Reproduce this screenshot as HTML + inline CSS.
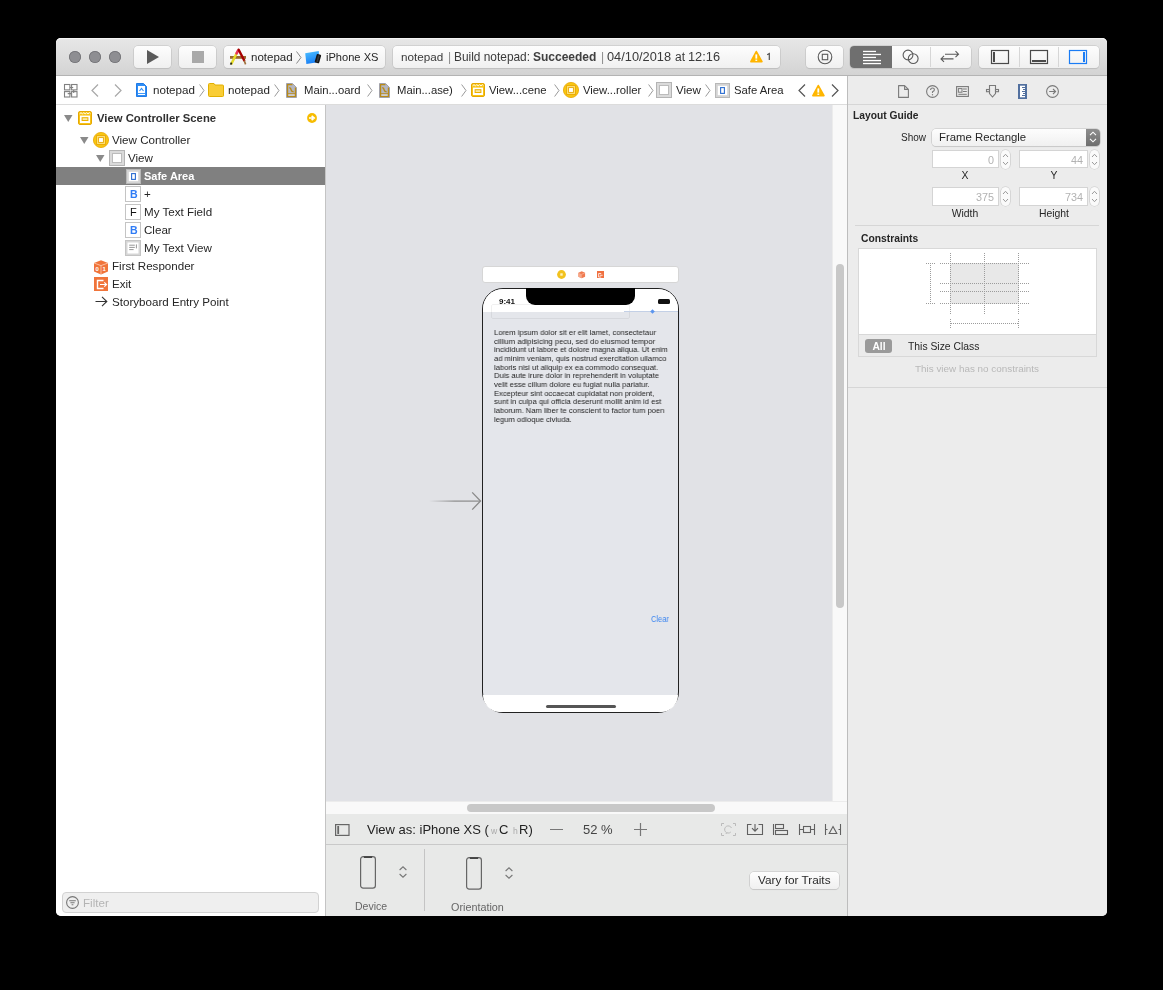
<!DOCTYPE html>
<html><head><meta charset="utf-8">
<style>
*{box-sizing:border-box;margin:0;padding:0}
html,body{width:1163px;height:990px;background:#000;overflow:hidden}
body{position:relative;font-family:"Liberation Sans",sans-serif;color:#262626}
.a{position:absolute}
svg.a{overflow:visible}
.t{position:absolute;white-space:nowrap;line-height:1;will-change:transform}
.btn{position:absolute;border-radius:4px;background:linear-gradient(#fdfdfd,#f0f0f0);box-shadow:0 0 0 0.6px #c2c2c2,0 0.8px 0.8px rgba(0,0,0,.12)}
</style></head><body>

<div class="a" style="left:56px;top:38px;width:1051px;height:878px;border-radius:5px;background:#ececec;overflow:hidden"></div>
<div class="a" style="left:56px;top:38px;width:1051px;height:38px;border-radius:5px 5px 0 0;background:linear-gradient(#e7e7e7,#d3d3d3);box-shadow:inset 0 1px 0 #f4f4f4"></div>
<div class="a" style="left:56px;top:75px;width:1051px;height:1px;background:#b4b4b4"></div>
<div class="a" style="left:69px;top:51px;width:12px;height:12px;border-radius:50%;background:#8e8e92;box-shadow:inset 0 0 0 0.8px #727276"></div>
<div class="a" style="left:89px;top:51px;width:12px;height:12px;border-radius:50%;background:#8e8e92;box-shadow:inset 0 0 0 0.8px #727276"></div>
<div class="a" style="left:109px;top:51px;width:12px;height:12px;border-radius:50%;background:#8e8e92;box-shadow:inset 0 0 0 0.8px #727276"></div>
<div class="btn" style="left:134px;top:46px;width:37px;height:22px"></div>
<div class="btn" style="left:179px;top:46px;width:37px;height:22px"></div>
<div class="btn" style="left:224px;top:46px;width:161px;height:22px"></div>
<div class="btn" style="left:393px;top:46px;width:387px;height:22px"></div>
<div class="btn" style="left:806px;top:46px;width:37px;height:22px"></div>
<div class="btn" style="left:850px;top:46px;width:121px;height:22px"></div>
<div class="btn" style="left:979px;top:46px;width:120px;height:22px"></div>
<svg class="a" style="left:147px;top:50px;" width="12" height="14" viewBox="0 0 12 14"><path d="M0 0 L12 7 L0 14Z" fill="#5a5a5a"/></svg>
<div class="a" style="left:192px;top:51px;width:12px;height:12px;background:#a9a9a9"></div>
<svg class="a" style="left:229px;top:48px;" width="18" height="17" viewBox="0 0 18 17"><rect x="1" y="8" width="16" height="2.8" fill="#9a6a30"/>
<path d="M2.1 16.4 L7.9 4.9" stroke="#e6dc28" stroke-width="2.4"/>
<path d="M7.6 5.4 L8.9 2.8" stroke="#e8305a" stroke-width="2.6" stroke-linecap="round"/>
<path d="M1.6 16.6 L2.6 14.6" stroke="#222" stroke-width="1.6"/>
<path d="M9.6 1.6 L15.2 12.4" stroke="#a60000" stroke-width="2.3" stroke-linecap="round"/>
<path d="M15.2 12.6 L16.6 16.4" stroke="#a0703c" stroke-width="1.6"/></svg>
<div class="t" style="left:250.50px;top:52px;font-size:11.5px;font-weight:400;color:#262626;">notepad</div>
<svg class="a" style="left:295.5px;top:51px;" width="6" height="13" viewBox="0 0 6 13"><path d="M0.5 0.5 L5 6.5 L0.5 12.5" fill="none" stroke="#888" stroke-width="1"/></svg>
<svg class="a" style="left:305px;top:50px;" width="16" height="14" viewBox="0 0 16 14"><defs><linearGradient id="sg" x1="0" y1="0" x2="0.3" y2="1"><stop offset="0" stop-color="#4cc0ff"/><stop offset="1" stop-color="#1a80f5"/></linearGradient></defs><path d="M0.2 3.2 L13.8 1.1 L14.2 12 L1.4 13.9Z" fill="url(#sg)"/>
<rect x="10.6" y="4.3" width="4.6" height="8.8" rx="0.9" fill="#161616" transform="rotate(16 12.9 8.7)"/><rect x="12.2" y="5.4" width="1.6" height="6.6" fill="#3a3a3a" transform="rotate(16 12.9 8.7)"/></svg>
<div class="t" style="left:325.60px;top:52px;font-size:11.1px;font-weight:400;color:#262626;">iPhone XS</div>
<div class="t" style="left:401.00px;top:51px;font-size:11.7px;font-weight:400;color:#3a3a3a;">notepad</div>
<div class="t" style="left:448.20px;top:51px;font-size:12px;font-weight:400;color:#8a8a8a;">|</div>
<div class="t" style="left:454.20px;top:52px;font-size:11.9px;font-weight:400;color:#3a3a3a;">Build notepad:</div>
<div class="t" style="left:533.40px;top:51px;font-size:12px;font-weight:700;color:#404040;">Succeeded</div>
<div class="t" style="left:600.60px;top:51px;font-size:12px;font-weight:400;color:#8a8a8a;">|</div>
<div class="t" style="left:606.80px;top:51px;font-size:12.8px;font-weight:400;color:#3a3a3a;">04/10/2018</div>
<div class="t" style="left:674.80px;top:51px;font-size:12px;font-weight:400;color:#3a3a3a;">at</div>
<div class="t" style="left:688.40px;top:51px;font-size:12.8px;font-weight:400;color:#3a3a3a;">12:16</div>
<svg class="a" style="left:749.5px;top:50px;" width="13" height="13" viewBox="0 0 13 13"><path d="M6.3 1.6 L11.9 11.6 H0.9Z" fill="#ffba00" stroke="#ffb400" stroke-linejoin="round" stroke-width="1.7"/><rect x="5.4" y="4.4" width="1.8" height="4.2" fill="#fff"/><rect x="5.4" y="9.6" width="1.8" height="1.3" fill="#fff"/></svg>
<svg class="a" style="left:766px;top:53px;" width="5" height="8" viewBox="0 0 5 8"><path d="M1.2 1.8 L3.3 0.6 V7" fill="none" stroke="#505050" stroke-width="1.2"/></svg>
<svg class="a" style="left:817px;top:49px;" width="16" height="16" viewBox="0 0 16 16"><circle cx="8" cy="8" r="6.8" fill="none" stroke="#5a5a5a" stroke-width="1.1"/><rect x="5.3" y="5.3" width="5.4" height="5.4" fill="none" stroke="#5a5a5a" stroke-width="1.1"/></svg>
<div class="a" style="left:850px;top:46px;width:42px;height:22px;background:#6f6f6f;border-radius:4px 0 0 4px"></div>
<div class="a" style="left:930px;top:47px;width:1px;height:20px;background:#d6d6d6"></div>
<svg class="a" style="left:863px;top:50px;" width="19" height="15" viewBox="0 0 19 15"><rect x="0" y="0.8" width="13" height="1.3" fill="#fff"/><rect x="0" y="3.8" width="18" height="1.3" fill="#fff"/><rect x="0" y="6.8" width="13" height="1.3" fill="#fff"/><rect x="0" y="9.9" width="18" height="1.3" fill="#fff"/><rect x="0" y="12.9" width="18" height="1.3" fill="#fff"/></svg>
<svg class="a" style="left:901px;top:48px;" width="18" height="16" viewBox="0 0 18 16"><circle cx="7" cy="7" r="4.9" fill="none" stroke="#5a5a5a" stroke-width="1.1"/><circle cx="12.2" cy="10.6" r="4.9" fill="none" stroke="#5a5a5a" stroke-width="1.1"/></svg>
<svg class="a" style="left:940px;top:50px;" width="20" height="12" viewBox="0 0 20 12"><path d="M5 4.2 H18.5 M15.5 1.2 L18.5 4.2 L15.5 7.2" fill="none" stroke="#5a5a5a" stroke-width="1.1"/><path d="M1 8.9 H13.5 M4 5.9 L1 8.9 L4 11.9" fill="none" stroke="#5a5a5a" stroke-width="1.1"/></svg>
<div class="a" style="left:1019px;top:47px;width:1px;height:20px;background:#d6d6d6"></div>
<div class="a" style="left:1058px;top:47px;width:1px;height:20px;background:#d6d6d6"></div>
<svg class="a" style="left:991px;top:50px;" width="18" height="14" viewBox="0 0 18 14"><rect x="0.5" y="0.5" width="17" height="13" fill="none" stroke="#4a4a4a" stroke-width="1.2"/><rect x="2" y="2" width="2" height="10" fill="#4a4a4a"/></svg>
<svg class="a" style="left:1030px;top:50px;" width="18" height="14" viewBox="0 0 18 14"><rect x="0.5" y="0.5" width="17" height="13" fill="none" stroke="#4a4a4a" stroke-width="1.2"/><rect x="2" y="10" width="14" height="2" fill="#4a4a4a"/></svg>
<svg class="a" style="left:1069px;top:50px;" width="18" height="14" viewBox="0 0 18 14"><rect x="0.5" y="0.5" width="17" height="13" fill="none" stroke="#1a7cf5" stroke-width="1.2"/><rect x="14" y="2" width="2" height="10" fill="#1a7cf5"/></svg>
<div class="a" style="left:56px;top:76px;width:791px;height:28px;background:#fff"></div>
<div class="a" style="left:56px;top:104px;width:1051px;height:1px;background:#dcdcdc"></div>
<svg class="a" style="left:64px;top:84px;" width="14" height="14" viewBox="0 0 14 14"><g fill="none" stroke="#808080" stroke-width="1.1"><rect x="0.5" y="0.5" width="5.4" height="5.4"/><rect x="7.6" y="0.5" width="5.4" height="5.4"/><rect x="0.5" y="7.6" width="5.4" height="5.4"/><rect x="7.6" y="7.6" width="5.4" height="5.4"/><path d="M5.9 3.5 H9.2 M3.7 9.6 H7.6 M9.7 5.9 V9"/></g></svg>
<svg class="a" style="left:91px;top:84px;" width="8" height="13" viewBox="0 0 8 13"><path d="M7 0.5 L1 6.5 L7 12.5" fill="none" stroke="#a8a8a8" stroke-width="1.2"/></svg>
<svg class="a" style="left:114px;top:84px;" width="8" height="13" viewBox="0 0 8 13"><path d="M1 0.5 L7 6.5 L1 12.5" fill="none" stroke="#a8a8a8" stroke-width="1.2"/></svg>
<svg class="a" style="left:136px;top:83px;" width="11" height="14" viewBox="0 0 11 14"><path d="M0.5 0.5 H7.5 L10.5 3.5 V13.5 H0.5Z" fill="#2f8df5" stroke="#1f7be8" stroke-width="1"/><rect x="2" y="3" width="7" height="9" fill="#fff"/><path d="M3.5 8 L5.5 5.5 L7.5 8" fill="none" stroke="#2f8df5" stroke-width="1.1"/><path d="M2 10.5 H9" stroke="#2f8df5" stroke-width="0.9"/></svg>
<div class="t" style="left:153.40px;top:84px;font-size:11.6px;font-weight:400;color:#262626;">notepad</div>
<svg class="a" style="left:199px;top:83.5px;" width="6" height="13" viewBox="0 0 6 13"><path d="M0.6 0.5 L5 6.5 L0.6 12.5" fill="none" stroke="#9a9a9a" stroke-width="1"/></svg>
<svg class="a" style="left:208px;top:83px;" width="16" height="14" viewBox="0 0 16 14"><path d="M0.5 1.5 Q0.5 0.5 1.5 0.5 H6 L7 2 H14.5 Q15.5 2 15.5 3 V12.8 Q15.5 13.5 14.5 13.5 H1.5 Q0.5 13.5 0.5 12.5Z" fill="#f9cd36" stroke="#e2b000" stroke-width="1"/></svg>
<div class="t" style="left:228.20px;top:84px;font-size:11.6px;font-weight:400;color:#262626;">notepad</div>
<svg class="a" style="left:274px;top:83.5px;" width="6" height="13" viewBox="0 0 6 13"><path d="M0.6 0.5 L5 6.5 L0.6 12.5" fill="none" stroke="#9a9a9a" stroke-width="1"/></svg>
<svg class="a" style="left:286px;top:83px;" width="11" height="15" viewBox="0 0 11 15"><path d="M0.5 0.5 H6.5 L10.5 4.5 V14.5 H0.5Z" fill="#b4b6c2" stroke="#a2a2aa" stroke-width="1"/><path d="M6.4 1.6 H1.6 V13.4 H9.4 V4.6" fill="none" stroke="#b88a18" stroke-width="1.2"/><path d="M1.6 10.8 H9.4" stroke="#b88a18" stroke-width="1.1"/><rect x="2.4" y="11.4" width="6.2" height="1.3" fill="#d8dae2"/><path d="M3.2 4.6 Q5 4.8 5 6.6 Q5.4 8.6 7.6 8.8" fill="none" stroke="#b88a18" stroke-width="1.4"/></svg>
<div class="t" style="left:303.60px;top:85px;font-size:11.3px;font-weight:400;color:#262626;">Main...oard</div>
<svg class="a" style="left:367px;top:83.5px;" width="6" height="13" viewBox="0 0 6 13"><path d="M0.6 0.5 L5 6.5 L0.6 12.5" fill="none" stroke="#9a9a9a" stroke-width="1"/></svg>
<svg class="a" style="left:379px;top:83px;" width="11" height="15" viewBox="0 0 11 15"><path d="M0.5 0.5 H6.5 L10.5 4.5 V14.5 H0.5Z" fill="#b4b6c2" stroke="#a2a2aa" stroke-width="1"/><path d="M6.4 1.6 H1.6 V13.4 H9.4 V4.6" fill="none" stroke="#b88a18" stroke-width="1.2"/><path d="M1.6 10.8 H9.4" stroke="#b88a18" stroke-width="1.1"/><rect x="2.4" y="11.4" width="6.2" height="1.3" fill="#d8dae2"/><path d="M3.2 4.6 Q5 4.8 5 6.6 Q5.4 8.6 7.6 8.8" fill="none" stroke="#b88a18" stroke-width="1.4"/></svg>
<div class="t" style="left:396.60px;top:85px;font-size:11.3px;font-weight:400;color:#262626;">Main...ase)</div>
<svg class="a" style="left:461px;top:83.5px;" width="6" height="13" viewBox="0 0 6 13"><path d="M0.6 0.5 L5 6.5 L0.6 12.5" fill="none" stroke="#9a9a9a" stroke-width="1"/></svg>
<svg class="a" style="left:471px;top:83px;width:14px;height:14px" width="14" height="14" viewBox="0 0 14 14"><rect x="0.5" y="0.5" width="13" height="13" rx="1.4" fill="#f8c417" stroke="#e6a800" stroke-width="1"/><path d="M1.6 2.8 L3 1.7 L4.4 2.8 L5.8 1.7 L7.2 2.8 L8.6 1.7 L10 2.8 L11.4 1.7 L12.4 2.6" fill="none" stroke="#fff" stroke-width="1"/><rect x="2" y="4.6" width="10" height="7.4" fill="#fff"/><rect x="4.1" y="6.7" width="5.8" height="2.8" fill="#fde9a0" stroke="#ecb000" stroke-width="1"/></svg>
<div class="t" style="left:489.20px;top:85px;font-size:11.3px;font-weight:400;color:#262626;">View...cene</div>
<svg class="a" style="left:554px;top:83.5px;" width="6" height="13" viewBox="0 0 6 13"><path d="M0.6 0.5 L5 6.5 L0.6 12.5" fill="none" stroke="#9a9a9a" stroke-width="1"/></svg>
<svg class="a" style="left:563px;top:82px;width:16px;height:16px" width="16" height="16" viewBox="0 0 16 16"><circle cx="8" cy="8" r="7.6" fill="#f8c612" stroke="#e8a600" stroke-width="0.8"/><rect x="3.6" y="3.6" width="8.8" height="8.8" fill="#fde27a" stroke="#e8a600" stroke-width="0.9"/><rect x="5.6" y="5.6" width="4.8" height="4.8" fill="#fff" stroke="#e8a600" stroke-width="0.9"/></svg>
<div class="t" style="left:583.00px;top:85px;font-size:11.3px;font-weight:400;color:#262626;">View...roller</div>
<svg class="a" style="left:647.5px;top:83.5px;" width="6" height="13" viewBox="0 0 6 13"><path d="M0.6 0.5 L5 6.5 L0.6 12.5" fill="none" stroke="#9a9a9a" stroke-width="1"/></svg>
<svg class="a" style="left:656px;top:82px;width:16px;height:16px" width="16" height="16" viewBox="0 0 16 16"><rect x="0.5" y="0.5" width="15" height="15" fill="#dadada" stroke="#b4b4b4" stroke-width="1"/><rect x="3.5" y="3.5" width="9" height="9" fill="#fff" stroke="#bcbcbc" stroke-width="1"/></svg>
<div class="t" style="left:676.00px;top:84px;font-size:11.6px;font-weight:400;color:#262626;">View</div>
<svg class="a" style="left:705px;top:83.5px;" width="6" height="13" viewBox="0 0 6 13"><path d="M0.6 0.5 L5 6.5 L0.6 12.5" fill="none" stroke="#9a9a9a" stroke-width="1"/></svg>
<svg class="a" style="left:714.5px;top:82.5px;width:15px;height:15px" width="15" height="15" viewBox="0 0 15 15"><rect x="0.5" y="0.5" width="14" height="14" fill="#d4d4d4" stroke="#b8b8b8" stroke-width="1"/><rect x="2.8" y="2.8" width="9.4" height="9.4" fill="#fff"/><rect x="5.6" y="4.6" width="3.8" height="5.8" fill="none" stroke="#2a6cd0" stroke-width="1.1"/></svg>
<div class="t" style="left:734.30px;top:85px;font-size:11.3px;font-weight:400;color:#262626;">Safe Area</div>
<svg class="a" style="left:798px;top:84px;" width="8" height="13" viewBox="0 0 8 13"><path d="M7 0.5 L1 6.5 L7 12.5" fill="none" stroke="#555" stroke-width="1.2"/></svg>
<svg class="a" style="left:811.5px;top:84px;" width="13" height="13" viewBox="0 0 13 13"><path d="M6.3 1.6 L11.9 11.6 H0.9Z" fill="#ffba00" stroke="#ffb400" stroke-linejoin="round" stroke-width="1.7"/><rect x="5.4" y="4.4" width="1.8" height="4.2" fill="#fff"/><rect x="5.4" y="9.6" width="1.8" height="1.3" fill="#fff"/></svg>
<svg class="a" style="left:831px;top:84px;" width="8" height="13" viewBox="0 0 8 13"><path d="M1 0.5 L7 6.5 L1 12.5" fill="none" stroke="#555" stroke-width="1.2"/></svg>
<div class="a" style="left:56px;top:105px;width:269px;height:811px;background:#fff;border-radius:0 0 0 5px"></div>
<div class="a" style="left:325px;top:105px;width:1px;height:811px;background:#c4c4c4"></div>
<svg class="a" style="left:64.3px;top:115.3px;" width="8.5" height="7" viewBox="0 0 8.5 7"><path d="M0 0 H8.5 L4.25 7Z" fill="#8a8a8a"/></svg>
<svg class="a" style="left:78.3px;top:111px;width:14px;height:14px" width="14" height="14" viewBox="0 0 14 14"><rect x="0.5" y="0.5" width="13" height="13" rx="1.4" fill="#f8c417" stroke="#e6a800" stroke-width="1"/><path d="M1.6 2.8 L3 1.7 L4.4 2.8 L5.8 1.7 L7.2 2.8 L8.6 1.7 L10 2.8 L11.4 1.7 L12.4 2.6" fill="none" stroke="#fff" stroke-width="1"/><rect x="2" y="4.6" width="10" height="7.4" fill="#fff"/><rect x="4.1" y="6.7" width="5.8" height="2.8" fill="#fde9a0" stroke="#ecb000" stroke-width="1"/></svg>
<div class="t" style="left:96.60px;top:113px;font-size:11.3px;font-weight:700;color:#303030;">View Controller Scene</div>
<svg class="a" style="left:307px;top:113px;" width="10" height="10" viewBox="0 0 10 10"><circle cx="5" cy="5" r="4.9" fill="#f7bc00"/><path d="M2 5 H6 M4.6 2.8 L7.2 5 L4.6 7.2" fill="none" stroke="#fff" stroke-width="1.6" stroke-linejoin="miter"/></svg>
<svg class="a" style="left:80px;top:137px;" width="8.5" height="7" viewBox="0 0 8.5 7"><path d="M0 0 H8.5 L4.25 7Z" fill="#8a8a8a"/></svg>
<svg class="a" style="left:93px;top:132px;width:16px;height:16px" width="16" height="16" viewBox="0 0 16 16"><circle cx="8" cy="8" r="7.6" fill="#f8c612" stroke="#e8a600" stroke-width="0.8"/><rect x="3.6" y="3.6" width="8.8" height="8.8" fill="#fde27a" stroke="#e8a600" stroke-width="0.9"/><rect x="5.6" y="5.6" width="4.8" height="4.8" fill="#fff" stroke="#e8a600" stroke-width="0.9"/></svg>
<div class="t" style="left:111.80px;top:134px;font-size:11.6px;font-weight:400;color:#262626;">View Controller</div>
<svg class="a" style="left:96px;top:155px;" width="8.5" height="7" viewBox="0 0 8.5 7"><path d="M0 0 H8.5 L4.25 7Z" fill="#8a8a8a"/></svg>
<svg class="a" style="left:109px;top:150px;width:16px;height:16px" width="16" height="16" viewBox="0 0 16 16"><rect x="0.5" y="0.5" width="15" height="15" fill="#dadada" stroke="#b4b4b4" stroke-width="1"/><rect x="3.5" y="3.5" width="9" height="9" fill="#fff" stroke="#bcbcbc" stroke-width="1"/></svg>
<div class="t" style="left:127.60px;top:152px;font-size:11.6px;font-weight:400;color:#262626;">View</div>
<div class="a" style="left:56px;top:167px;width:269px;height:18px;background:#808080"></div>
<svg class="a" style="left:125.5px;top:168.5px;width:15px;height:15px" width="15" height="15" viewBox="0 0 15 15"><rect x="0.5" y="0.5" width="14" height="14" fill="#d4d4d4" stroke="#b8b8b8" stroke-width="1"/><rect x="2.8" y="2.8" width="9.4" height="9.4" fill="#fff"/><rect x="5.6" y="4.6" width="3.8" height="5.8" fill="none" stroke="#2a6cd0" stroke-width="1.1"/></svg>
<div class="t" style="left:144.20px;top:171px;font-size:11.0px;font-weight:700;color:#fff;">Safe Area</div>
<svg class="a" style="left:125px;top:186px;" width="16" height="16" viewBox="0 0 16 16"><rect x="0.5" y="0.5" width="15" height="15" fill="#fff" stroke="#c4c4c4" stroke-width="1"/></svg>
<div class="t" style="left:129.60px;top:189px;font-size:10.6px;font-weight:700;color:#2f7cf6;">B</div>
<div class="t" style="left:143.90px;top:188px;font-size:11.6px;font-weight:400;color:#262626;">+</div>
<svg class="a" style="left:125px;top:204px;" width="16" height="16" viewBox="0 0 16 16"><rect x="0.5" y="0.5" width="15" height="15" fill="#fff" stroke="#c4c4c4" stroke-width="1"/></svg>
<div class="t" style="left:129.60px;top:207px;font-size:11px;font-weight:400;color:#111;">F</div>
<div class="t" style="left:143.90px;top:206px;font-size:11.6px;font-weight:400;color:#262626;">My Text Field</div>
<svg class="a" style="left:125px;top:222px;" width="16" height="16" viewBox="0 0 16 16"><rect x="0.5" y="0.5" width="15" height="15" fill="#fff" stroke="#c4c4c4" stroke-width="1"/></svg>
<div class="t" style="left:129.60px;top:225px;font-size:10.6px;font-weight:700;color:#2f7cf6;">B</div>
<div class="t" style="left:143.90px;top:224px;font-size:11.6px;font-weight:400;color:#262626;">Clear</div>
<svg class="a" style="left:125px;top:240px;" width="16" height="16" viewBox="0 0 16 16"><rect x="0.5" y="0.5" width="15" height="15" fill="#d6d6d6" stroke="#c4c4c4" stroke-width="1"/><rect x="2.5" y="2.5" width="11" height="11" fill="#fff"/><path d="M4.2 5.2 H9.8 M4.2 7.4 H9.8 M4.2 9.6 H8.6" stroke="#8a8a8a" stroke-width="0.9"/><path d="M11.4 4.4 V8.4" stroke="#8a8a8a" stroke-width="0.9"/></svg>
<div class="t" style="left:143.90px;top:242px;font-size:11.6px;font-weight:400;color:#262626;">My Text View</div>
<svg class="a" style="left:93px;top:259px;" width="16" height="16" viewBox="0 0 16 16"><path d="M1 4 L8 1.2 L15 4 L15 12.6 L8 15.4 L1 12.6Z" fill="#f0743a"/><path d="M1 4 L8 6.6 L15 4" fill="none" stroke="#ffd1b8" stroke-width="0.8"/><path d="M8 6.6 V15.4" stroke="#ffd1b8" stroke-width="0.8"/><text x="2.6" y="12" font-size="6" fill="#fff" font-family="Liberation Sans" font-weight="700">0</text><text x="9.6" y="12.4" font-size="6" fill="#fff" font-family="Liberation Sans" font-weight="700">1</text></svg>
<div class="t" style="left:111.90px;top:260px;font-size:11.6px;font-weight:400;color:#262626;">First Responder</div>
<svg class="a" style="left:94px;top:277px;" width="14" height="14" viewBox="0 0 14 14"><rect x="0" y="0" width="14" height="14" fill="#f0743a"/><path d="M9.5 3.5 H3.5 V11.5 H9.5" fill="none" stroke="#fff" stroke-width="1.4"/><path d="M6 7.5 H12.5 M10.3 5.4 L12.5 7.5 L10.3 9.6" fill="none" stroke="#fff" stroke-width="1.2"/></svg>
<div class="t" style="left:111.90px;top:278px;font-size:11.6px;font-weight:400;color:#262626;">Exit</div>
<svg class="a" style="left:95px;top:296px;" width="13" height="11" viewBox="0 0 13 11"><path d="M0.5 5.5 H12 M7 0.8 L11.8 5.5 L7 10.2" fill="none" stroke="#333" stroke-width="1.1"/></svg>
<div class="t" style="left:111.90px;top:296px;font-size:11.6px;font-weight:400;color:#262626;">Storyboard Entry Point</div>
<div class="a" style="left:61.5px;top:891.5px;width:257px;height:21px;background:#efefef;border:1px solid #d2d2d2;border-radius:4px"></div>
<svg class="a" style="left:66px;top:896px;" width="13" height="13" viewBox="0 0 13 13"><circle cx="6.5" cy="6.5" r="5.9" fill="none" stroke="#777" stroke-width="1.1"/><path d="M3.2 4.8 H9.8 M4.4 6.8 H8.6 M5.6 8.8 H7.4" stroke="#777" stroke-width="1.1"/></svg>
<div class="t" style="left:83.30px;top:897px;font-size:11.6px;font-weight:400;color:#b4b4b4;">Filter</div>
<div class="a" style="left:326px;top:105px;width:506px;height:696px;background:#e1e2e6"></div>
<div class="a" style="left:832px;top:105px;width:15px;height:696px;background:#f9f9f9;border-left:1px solid #ececec"></div>
<div class="a" style="left:836px;top:264px;width:8px;height:344px;background:#c8c8c8;border-radius:4px"></div>
<div class="a" style="left:326px;top:801px;width:521px;height:13px;background:#f9f9f9;border-top:1px solid #ececec"></div>
<div class="a" style="left:467px;top:804px;width:248px;height:8px;background:#c8c8c8;border-radius:4px"></div>
<div class="a" style="left:847px;top:105px;width:1px;height:811px;background:#bdbdbd"></div>
<svg class="a" style="left:429px;top:491px;" width="53" height="20" viewBox="0 0 53 20"><defs><linearGradient id="ag" x1="0" x2="1"><stop offset="0" stop-color="#8a8a8a" stop-opacity="0"/><stop offset="0.5" stop-color="#8a8a8a"/></linearGradient></defs><rect x="0" y="9.5" width="51.5" height="1.2" fill="url(#ag)"/><path d="M43.2 1.4 L51.5 10 L43.2 18.6" fill="none" stroke="#8a8a8a" stroke-width="1.3"/></svg>
<div class="a" style="left:482px;top:266px;width:197px;height:17px;background:#fff;border:1px solid #d6d6d6;border-radius:3px"></div>
<svg class="a" style="left:557.4px;top:270.3px;" width="9" height="9" viewBox="0 0 9 9"><circle cx="4.5" cy="4.5" r="4.4" fill="#f2c21e"/><rect x="3.3" y="3.3" width="2.4" height="2.4" fill="#fff3c0"/></svg>
<svg class="a" style="left:577.6px;top:271.2px;" width="7.5" height="7.5" viewBox="0 0 7.5 7.5"><path d="M0.4 1.8 L3.75 0.3 L7.1 1.8 V5.8 L3.75 7.3 L0.4 5.8Z" fill="#f07a50"/><path d="M0.4 1.8 L3.75 3.3 V7.3 L0.4 5.8Z" fill="#f5a88a"/><path d="M3.75 3.3 L7.1 1.8" stroke="#fbd0c0" stroke-width="0.5"/></svg>
<div class="a" style="left:597px;top:271.4px;width:7px;height:6.8px;background:#f07040"></div>
<svg class="a" style="left:598.2px;top:272.6px;" width="5" height="4.5" viewBox="0 0 5 4.5"><path d="M3.2 0.5 H0.6 V4 H3.2 M1.8 2.25 H4.6" fill="none" stroke="#fff" stroke-width="0.8"/></svg>
<div class="a" style="left:482px;top:288px;width:197px;height:425px;background:#e4e6eb;border:1px solid #222;border-radius:21px;overflow:hidden"></div>
<div class="a" style="left:483px;top:289px;width:195px;height:23px;background:#fff;border-radius:20px 20px 0 0"></div>
<div class="a" style="left:483px;top:695px;width:195px;height:17px;background:#fff;border-radius:0 0 20px 20px"></div>
<div class="a" style="left:526px;top:288px;width:109px;height:17px;background:#000;border-radius:0 0 9px 9px"></div>
<div class="t" style="left:499.00px;top:298px;font-size:8px;font-weight:700;color:#111;">9:41</div>
<div class="a" style="left:658px;top:299px;width:12px;height:5px;background:#111;border-radius:1.5px"></div>
<div class="a" style="left:491px;top:304px;width:139px;height:15px;border:1px solid rgba(0,0,0,0.06);border-radius:2px"></div>
<div class="a" style="left:624px;top:311px;width:54px;height:1px;background:#c3d0e6"></div>
<svg class="a" style="left:649.5px;top:309px;" width="5" height="5" viewBox="0 0 5 5"><path d="M2.5 0.2 L4.8 2.5 L2.5 4.8 L0.2 2.5Z" fill="#5b95ee"/></svg>
<div class="a" style="left:679px;top:312px;width:1px;height:18px;background:#d5dcea"></div>
<div class="t" style="left:494.00px;top:329px;font-size:8px;font-weight:400;color:#1e1e1e;transform:scaleX(0.951);transform-origin:0 0">Lorem ipsum dolor sit er elit lamet, consectetaur</div>
<div class="t" style="left:494.00px;top:338px;font-size:8px;font-weight:400;color:#1e1e1e;transform:scaleX(0.951);transform-origin:0 0">cillium adipisicing pecu, sed do eiusmod tempor</div>
<div class="t" style="left:494.00px;top:346px;font-size:8px;font-weight:400;color:#1e1e1e;transform:scaleX(0.951);transform-origin:0 0">incididunt ut labore et dolore magna aliqua. Ut enim</div>
<div class="t" style="left:494.00px;top:355px;font-size:8px;font-weight:400;color:#1e1e1e;transform:scaleX(0.951);transform-origin:0 0">ad minim veniam, quis nostrud exercitation ullamco</div>
<div class="t" style="left:494.00px;top:364px;font-size:8px;font-weight:400;color:#1e1e1e;transform:scaleX(0.951);transform-origin:0 0">laboris nisi ut aliquip ex ea commodo consequat.</div>
<div class="t" style="left:494.00px;top:372px;font-size:8px;font-weight:400;color:#1e1e1e;transform:scaleX(0.951);transform-origin:0 0">Duis aute irure dolor in reprehenderit in voluptate</div>
<div class="t" style="left:494.00px;top:381px;font-size:8px;font-weight:400;color:#1e1e1e;transform:scaleX(0.951);transform-origin:0 0">velit esse cillum dolore eu fugiat nulla pariatur.</div>
<div class="t" style="left:494.00px;top:390px;font-size:8px;font-weight:400;color:#1e1e1e;transform:scaleX(0.951);transform-origin:0 0">Excepteur sint occaecat cupidatat non proident,</div>
<div class="t" style="left:494.00px;top:398px;font-size:8px;font-weight:400;color:#1e1e1e;transform:scaleX(0.951);transform-origin:0 0">sunt in culpa qui officia deserunt mollit anim id est</div>
<div class="t" style="left:494.00px;top:407px;font-size:8px;font-weight:400;color:#1e1e1e;transform:scaleX(0.951);transform-origin:0 0">laborum. Nam liber te conscient to factor tum poen</div>
<div class="t" style="left:494.00px;top:416px;font-size:8px;font-weight:400;color:#1e1e1e;transform:scaleX(0.951);transform-origin:0 0">legum odioque civiuda.</div>
<div class="t" style="left:651.40px;top:615px;font-size:8.6px;font-weight:400;color:#3d86f0;transform:scaleX(0.875);transform-origin:0 0">Clear</div>
<div class="a" style="left:545.5px;top:705px;width:70px;height:3px;background:#555;border-radius:2px"></div>
<div class="a" style="left:326px;top:814px;width:521px;height:30px;background:#e8e9e8"></div>
<div class="a" style="left:326px;top:844px;width:521px;height:1px;background:#c9c9c9"></div>
<div class="a" style="left:326px;top:845px;width:521px;height:71px;background:#e8e9e8"></div>
<svg class="a" style="left:335px;top:824px;" width="15" height="12" viewBox="0 0 15 12"><rect x="0.6" y="0.6" width="13.4" height="10.8" fill="none" stroke="#666" stroke-width="1.2"/><rect x="2.3" y="2" width="1.8" height="8" fill="#666"/></svg>
<div class="t" style="left:367.40px;top:823px;font-size:13px;font-weight:400;color:#222;">View as: iPhone XS (</div>
<div class="t" style="left:491.40px;top:827px;font-size:8.6px;font-weight:400;color:#aaa;">w</div>
<div class="t" style="left:499.20px;top:823px;font-size:13px;font-weight:400;color:#222;">C</div>
<div class="t" style="left:513.40px;top:827px;font-size:8.6px;font-weight:400;color:#aaa;">h</div>
<div class="t" style="left:519.40px;top:823px;font-size:13px;font-weight:400;color:#222;">R)</div>
<div class="a" style="left:550px;top:829px;width:13px;height:1.2px;background:#777"></div>
<div class="t" style="left:583.40px;top:823px;font-size:13px;font-weight:400;color:#444;">52 %</div>
<svg class="a" style="left:634px;top:823px;" width="13" height="13" viewBox="0 0 13 13"><path d="M6.5 0 V13 M0 6.5 H13" stroke="#777" stroke-width="1.2"/></svg>
<svg class="a" style="left:721px;top:823px;" width="15" height="13" viewBox="0 0 15 13"><path d="M0.5 3 V0.5 H3 M12 0.5 H14.5 V3 M14.5 10 V12.5 H12 M3 12.5 H0.5 V10" fill="none" stroke="#bbb" stroke-width="1"/><path d="M10.5 5 A3.6 3.6 0 1 0 9.8 9" fill="none" stroke="#bbb" stroke-width="1"/><path d="M6 9.5 L4.8 11" stroke="#bbb"/></svg>
<svg class="a" style="left:747px;top:824px;" width="16" height="12" viewBox="0 0 16 12"><path d="M4.5 0.5 H0.5 V10.5 H15.5 V0.5 H11.5" fill="none" stroke="#606060" stroke-width="1.1"/><path d="M8 0 V7 M5 4.2 L8 7.2 L11 4.2" fill="none" stroke="#606060" stroke-width="1.1"/></svg>
<svg class="a" style="left:773px;top:824px;" width="16" height="12" viewBox="0 0 16 12"><path d="M0.5 0 V11" stroke="#606060" stroke-width="1.1"/><rect x="2.5" y="0.5" width="8" height="4" fill="none" stroke="#606060" stroke-width="1.1"/><rect x="2.5" y="6.5" width="12" height="4" fill="none" stroke="#606060" stroke-width="1.1"/></svg>
<svg class="a" style="left:799px;top:824px;" width="16" height="12" viewBox="0 0 16 12"><path d="M0.5 0 V11 M15.5 0 V11 M0.5 5.5 H4.5 M11.5 5.5 H15.5" stroke="#606060" stroke-width="1.1"/><rect x="4.5" y="2.5" width="7" height="6" fill="none" stroke="#606060" stroke-width="1.1"/></svg>
<svg class="a" style="left:825px;top:824px;" width="16" height="12" viewBox="0 0 16 12"><path d="M0.5 0 V11 M15.5 0 V11 M0.5 5.5 H2.5 M13.5 5.5 H15.5" stroke="#606060" stroke-width="1.1"/><path d="M8 2.6 L11.8 9.5 H4.2Z" fill="none" stroke="#606060" stroke-width="1.1" stroke-linejoin="miter"/></svg>
<svg class="a" style="left:359.5px;top:855.5px;" width="16" height="33" viewBox="0 0 16 33"><rect x="0.6" y="0.6" width="14.8" height="31.6" rx="2.6" fill="none" stroke="#666" stroke-width="1.2"/><path d="M3.8 1.1 H12.2" stroke="#444" stroke-width="1.8"/></svg>
<svg class="a" style="left:398.5px;top:865.5px;" width="8" height="12" viewBox="0 0 8 12"><path d="M0.6 4 L4 0.8 L7.4 4 M0.6 8 L4 11.2 L7.4 8" fill="none" stroke="#777" stroke-width="1.1"/></svg>
<div class="t" style="left:355.30px;top:901px;font-size:10.5px;font-weight:400;color:#666;">Device</div>
<div class="a" style="left:424px;top:849px;width:1px;height:62px;background:#c4c4c4"></div>
<svg class="a" style="left:465.5px;top:856.5px;" width="16" height="33" viewBox="0 0 16 33"><rect x="0.6" y="0.6" width="14.8" height="31.6" rx="2.6" fill="none" stroke="#666" stroke-width="1.2"/><path d="M3.8 1.1 H12.2" stroke="#444" stroke-width="1.8"/></svg>
<svg class="a" style="left:504.5px;top:866.5px;" width="8" height="12" viewBox="0 0 8 12"><path d="M0.6 4 L4 0.8 L7.4 4 M0.6 8 L4 11.2 L7.4 8" fill="none" stroke="#777" stroke-width="1.1"/></svg>
<div class="t" style="left:451.20px;top:902px;font-size:10.8px;font-weight:400;color:#666;">Orientation</div>
<div class="btn" style="left:749.5px;top:871.5px;width:89px;height:17px;border-radius:4px"></div>
<div class="t" style="left:757.70px;top:875px;font-size:11.8px;font-weight:400;color:#2a2a2a;">Vary for Traits</div>
<div class="a" style="left:848px;top:76px;width:259px;height:840px;background:#ececec;border-radius:0 0 5px 0"></div>
<div class="a" style="left:848px;top:104px;width:259px;height:1px;background:#d6d6d6"></div>
<div class="a" style="left:847px;top:76px;width:1px;height:840px;background:#bdbdbd"></div>
<svg class="a" style="left:898px;top:85px;" width="11" height="13" viewBox="0 0 11 13"><path d="M0.6 0.6 H6.6 L10.4 4.4 V12.4 H0.6Z M6.6 0.6 V4.4 H10.4" fill="none" stroke="#7a7a7a" stroke-width="1.1" stroke-linejoin="round"/></svg>
<svg class="a" style="left:926px;top:85px;" width="13" height="13" viewBox="0 0 13 13"><circle cx="6.5" cy="6.5" r="5.9" fill="none" stroke="#7a7a7a" stroke-width="1.1"/><path d="M4.6 5 Q4.6 3 6.5 3 Q8.4 3 8.4 4.8 Q8.4 6 6.5 6.8 V8" fill="none" stroke="#7a7a7a" stroke-width="1.1"/><circle cx="6.5" cy="9.8" r="0.7" fill="#7a7a7a"/></svg>
<svg class="a" style="left:956px;top:86px;" width="13" height="11" viewBox="0 0 13 11"><rect x="0.6" y="0.6" width="11.8" height="9.8" fill="none" stroke="#7a7a7a" stroke-width="1.1"/><rect x="2.4" y="2.6" width="3.6" height="3.6" fill="none" stroke="#7a7a7a" stroke-width="1"/><path d="M7 3 H10.8 M7 5.5 H10.8 M2.4 8.3 H10.8" stroke="#7a7a7a" stroke-width="1"/></svg>
<svg class="a" style="left:986px;top:85px;" width="13" height="13" viewBox="0 0 13 13"><path d="M3.5 0.5 H9.5 V8.5 L6.5 12 L3.5 8.5Z" fill="none" stroke="#7a7a7a" stroke-width="1.1"/><rect x="0.5" y="4.5" width="3" height="2.2" fill="none" stroke="#7a7a7a" stroke-width="1.1"/><rect x="9.5" y="4.5" width="3" height="2.2" fill="none" stroke="#7a7a7a" stroke-width="1.1"/></svg>
<svg class="a" style="left:1018px;top:84px;" width="9" height="15" viewBox="0 0 9 15"><rect x="0" y="0" width="9" height="15" fill="#52709f"/><rect x="2" y="1.7" width="5" height="11.6" fill="#fff"/><path d="M4 3.5 H7 M5 5.5 H7 M4 7.5 H7 M5 9.5 H7 M4 11.5 H7" stroke="#52709f" stroke-width="1"/></svg>
<svg class="a" style="left:1046px;top:85px;" width="13" height="13" viewBox="0 0 13 13"><circle cx="6.5" cy="6.5" r="5.9" fill="none" stroke="#7a7a7a" stroke-width="1.1"/><path d="M3.2 6.5 H9.6 M7 4 L9.6 6.5 L7 9" fill="none" stroke="#7a7a7a" stroke-width="1.1"/></svg>
<div class="t" style="left:852.80px;top:111px;font-size:10.25px;font-weight:700;color:#262626;">Layout Guide</div>
<div class="t" style="right:237.00px;top:133px;font-size:10.0px;font-weight:400;color:#262626;">Show</div>
<div class="btn" style="left:931.5px;top:128.5px;width:168.5px;height:17px;border-radius:4px"></div>
<div class="a" style="left:1085.5px;top:128.5px;width:14.5px;height:17px;background:linear-gradient(#8e8e8e,#6e6e6e);border-radius:0 4px 4px 0"></div>
<svg class="a" style="left:1088.8px;top:131px;" width="8" height="12" viewBox="0 0 8 12"><path d="M1 4.2 L4 1.2 L7 4.2 M1 7.8 L4 10.8 L7 7.8" fill="none" stroke="#fff" stroke-width="1.1"/></svg>
<div class="t" style="left:939.30px;top:132px;font-size:11.37px;font-weight:400;color:#262626;">Frame Rectangle</div>
<div class="a" style="left:931.5px;top:150.3px;width:67.10000000000002px;height:18.099999999999994px;background:#fff;border:1px solid #d4d4d4"></div>
<div class="t" style="right:168.70px;top:155px;font-size:10.8px;font-weight:400;color:#b2b2b2;">0</div>
<div class="a" style="left:1000.6px;top:149.8px;width:9.5px;height:19px;border-radius:5px;background:#fafafa;box-shadow:0 0 0 0.6px #c8c8c8"></div>
<svg class="a" style="left:1002.1px;top:153.3px;" width="7" height="13" viewBox="0 0 7 13"><path d="M1 4 L3.5 1.3 L6 4 M1 9 L3.5 11.7 L6 9" fill="none" stroke="#999" stroke-width="1"/></svg>
<div class="t" style="left:765.05px;width:400px;text-align:center;top:171px;font-size:10.4px;font-weight:400;color:#262626;">X</div>
<div class="a" style="left:1019.4px;top:150.3px;width:68.19999999999993px;height:18.099999999999994px;background:#fff;border:1px solid #d4d4d4"></div>
<div class="t" style="right:79.70px;top:155px;font-size:10.8px;font-weight:400;color:#b2b2b2;">44</div>
<div class="a" style="left:1089.6px;top:149.8px;width:9.5px;height:19px;border-radius:5px;background:#fafafa;box-shadow:0 0 0 0.6px #c8c8c8"></div>
<svg class="a" style="left:1091.1px;top:153.3px;" width="7" height="13" viewBox="0 0 7 13"><path d="M1 4 L3.5 1.3 L6 4 M1 9 L3.5 11.7 L6 9" fill="none" stroke="#999" stroke-width="1"/></svg>
<div class="t" style="left:853.50px;width:400px;text-align:center;top:171px;font-size:10.4px;font-weight:400;color:#262626;">Y</div>
<div class="a" style="left:931.5px;top:187.2px;width:67.10000000000002px;height:18.5px;background:#fff;border:1px solid #d4d4d4"></div>
<div class="t" style="right:168.70px;top:192px;font-size:10.8px;font-weight:400;color:#b2b2b2;">375</div>
<div class="a" style="left:1000.6px;top:186.7px;width:9.5px;height:19px;border-radius:5px;background:#fafafa;box-shadow:0 0 0 0.6px #c8c8c8"></div>
<svg class="a" style="left:1002.1px;top:190.2px;" width="7" height="13" viewBox="0 0 7 13"><path d="M1 4 L3.5 1.3 L6 4 M1 9 L3.5 11.7 L6 9" fill="none" stroke="#999" stroke-width="1"/></svg>
<div class="t" style="left:765.05px;width:400px;text-align:center;top:209px;font-size:10.4px;font-weight:400;color:#262626;">Width</div>
<div class="a" style="left:1019.4px;top:187.2px;width:68.19999999999993px;height:18.5px;background:#fff;border:1px solid #d4d4d4"></div>
<div class="t" style="right:79.70px;top:192px;font-size:10.8px;font-weight:400;color:#b2b2b2;">734</div>
<div class="a" style="left:1089.6px;top:186.7px;width:9.5px;height:19px;border-radius:5px;background:#fafafa;box-shadow:0 0 0 0.6px #c8c8c8"></div>
<svg class="a" style="left:1091.1px;top:190.2px;" width="7" height="13" viewBox="0 0 7 13"><path d="M1 4 L3.5 1.3 L6 4 M1 9 L3.5 11.7 L6 9" fill="none" stroke="#999" stroke-width="1"/></svg>
<div class="t" style="left:853.50px;width:400px;text-align:center;top:209px;font-size:10.4px;font-weight:400;color:#262626;">Height</div>
<div class="a" style="left:855px;top:224.5px;width:244px;height:1px;background:#d6d6d6"></div>
<div class="t" style="left:861.10px;top:234px;font-size:10.3px;font-weight:700;color:#262626;">Constraints</div>
<div class="a" style="left:857.5px;top:247.5px;width:239px;height:109px;border:1px solid #d8d8d8;background:#ebebeb"></div>
<div class="a" style="left:858.5px;top:248.5px;width:237px;height:86.5px;background:#fff;border-bottom:1px solid #d8d8d8"></div>
<svg class="a" style="left:920px;top:248px;" width="120" height="84" viewBox="0 0 120 84"><rect x="30" y="15" width="69" height="41" rx="3" fill="#e8e8e8"/><path d="M30.5 5 V66 M64.5 5 V66 M98.5 5 V66" stroke="#9c9c9c" stroke-width="1" stroke-dasharray="1 1" shape-rendering="crispEdges"/><path d="M20 15.5 H110 M20 35.5 H110 M20 43.5 H110 M20 55.5 H110" stroke="#9c9c9c" stroke-width="1" stroke-dasharray="1 1" shape-rendering="crispEdges"/><path d="M6 15.5 H16 M6 55.5 H16 M10.5 17 V55" stroke="#9c9c9c" stroke-width="1" stroke-dasharray="1 1" shape-rendering="crispEdges"/><path d="M31 75.5 H98 M30.5 71 V81 M98.5 71 V81" stroke="#9c9c9c" stroke-width="1" stroke-dasharray="1 1" shape-rendering="crispEdges"/></svg>
<div class="a" style="left:865px;top:339.2px;width:27px;height:13.4px;background:#9a9a9a;border-radius:3px"></div>
<div class="t" style="left:678.50px;width:400px;text-align:center;top:342px;font-size:10.3px;font-weight:700;color:#fff;">All</div>
<div class="t" style="left:907.60px;top:342px;font-size:10.36px;font-weight:400;color:#262626;">This Size Class</div>
<div class="t" style="left:915.40px;top:364px;font-size:9.9px;font-weight:400;color:#b8b8b8;">This view has no constraints</div>
<div class="a" style="left:848px;top:387px;width:259px;height:1px;background:#d6d6d6"></div>
</body></html>
